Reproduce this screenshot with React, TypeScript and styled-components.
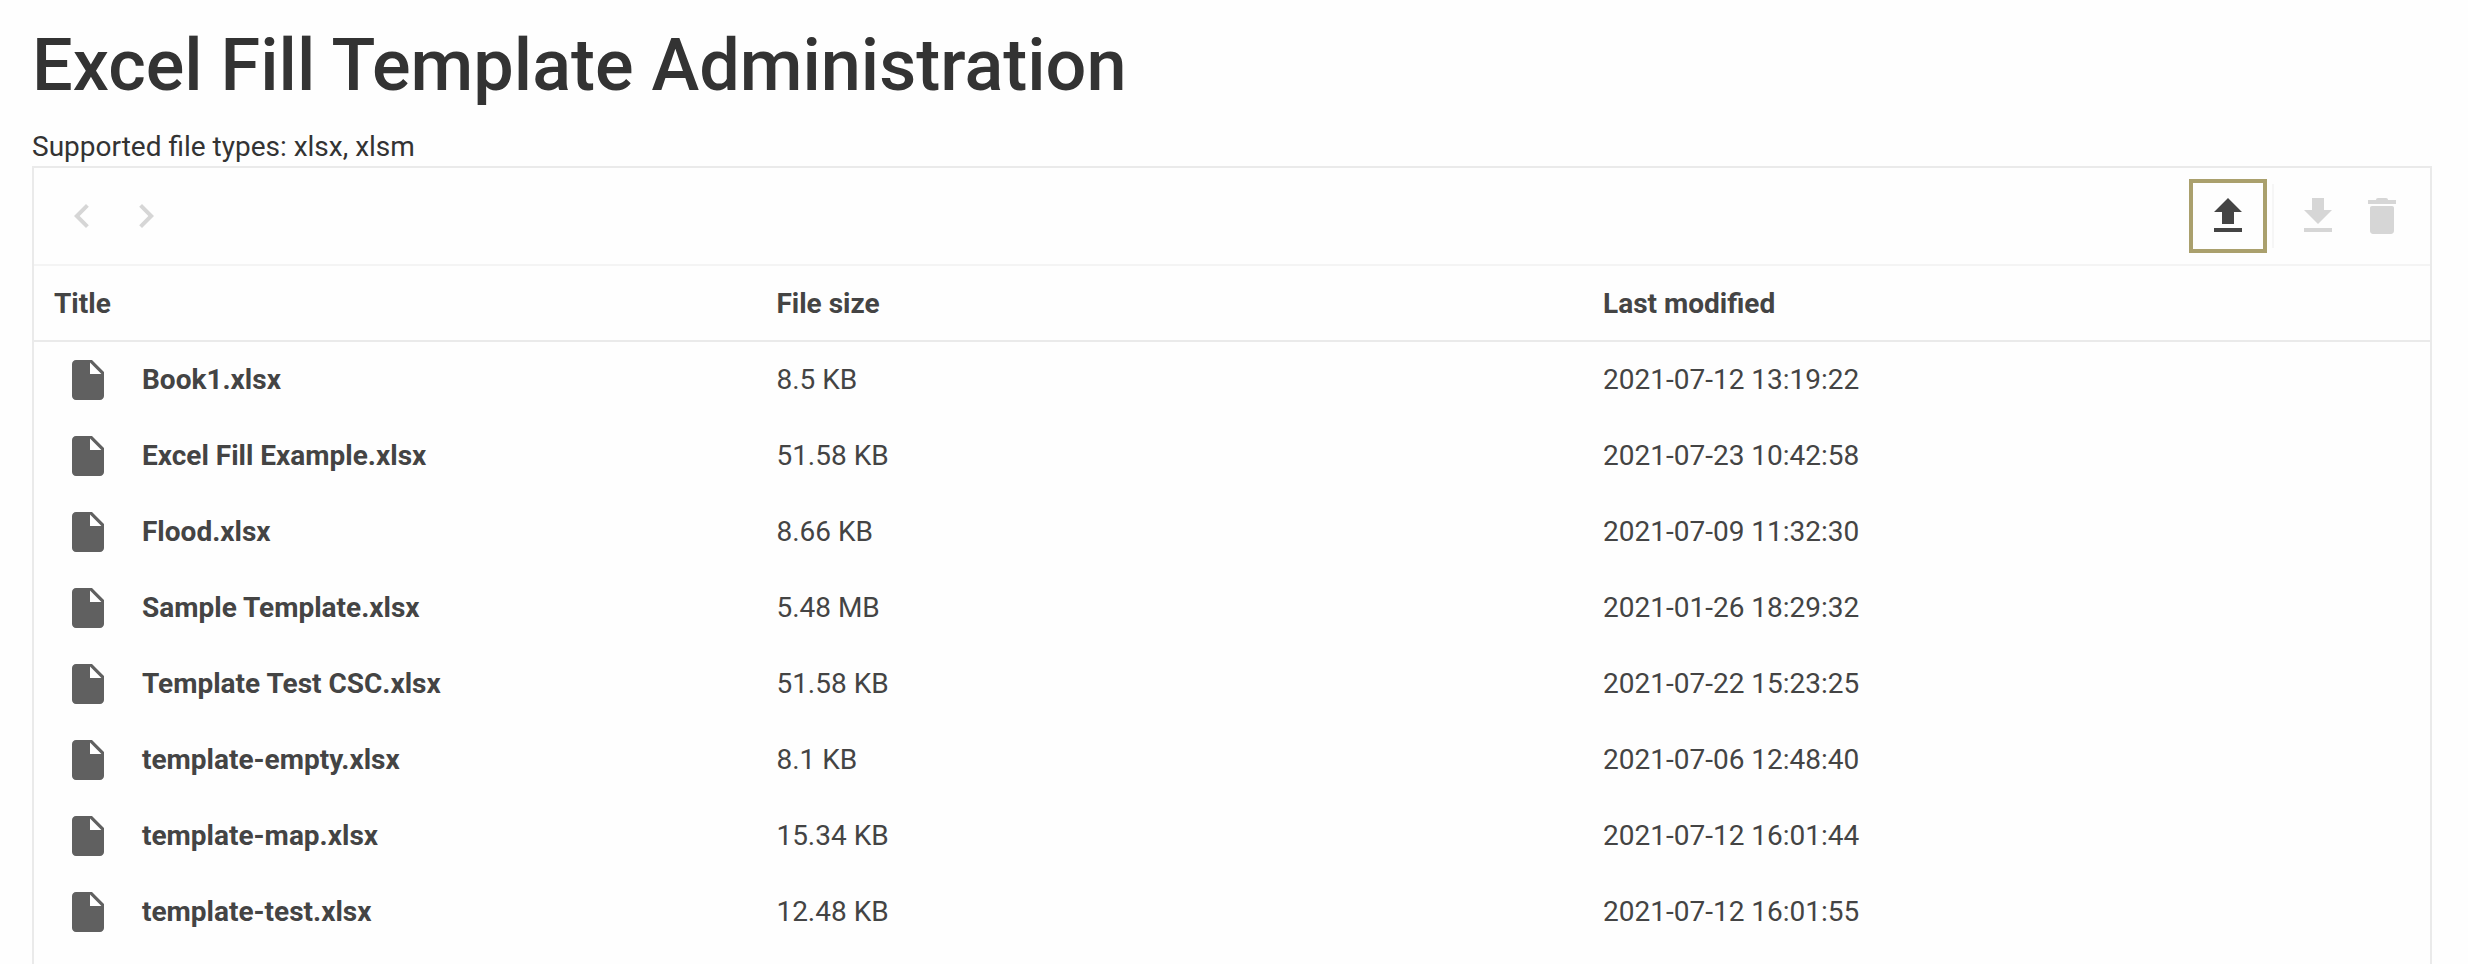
import React from 'react';
import styled, { createGlobalStyle } from 'styled-components';

const GlobalStyle = createGlobalStyle`
  *, *::before, *::after { box-sizing: border-box; }
  body {
    margin: 0;
    background: #fefefe;
    color: #333;
    font-family: Roboto, "Liberation Sans", sans-serif;
    font-size: 28px;
    line-height: 32px;
  }
`;

const Page = styled.main`
  display: flex;
  flex-direction: column;
  min-height: 100vh;
  padding: 24px 36px 0 32px;
`;

const Heading = styled.h1`
  margin: 0;
  font-size: 72px;
  font-weight: 500;
  line-height: 84px;
`;

const Note = styled.p`
  margin: 23px 0 3px;
`;

const Panel = styled.section`
  flex: 1;
  border: 2px solid #eaeaea;
  border-bottom: 0;
`;

const Toolbar = styled.div`
  display: flex;
  align-items: center;
  justify-content: space-between;
  height: 98px;
  padding: 0 24px;
  border-bottom: 2px solid #f4f4f4;
`;

const Group = styled.div`
  display: flex;
  align-items: center;
  gap: 16px;
`;

const IconButton = styled.button`
  display: flex;
  padding: 0;
  border: 0;
  background: none;
  color: #444;

  &:disabled { color: #d6d6d6; }
`;

const UploadButton = styled(IconButton)`
  padding: 9px 11px;
  border: 4px solid #aaa06d;
`;

const UploadSlot = styled.div`
  display: flex;
  align-items: center;
  height: 64px;
  padding-right: 5px;
  border-right: 2px solid #f6f6f6;
  margin-right: 4px;
`;

const Table = styled.table`
  width: 100%;
  border-collapse: separate;
  border-spacing: 0;
  table-layout: fixed;
  color: #444;
  text-align: left;
`;

const Column = styled.col<{ $share?: string }>`
  width: ${({ $share }) => $share ?? 'auto'};
`;

const HeadCell = styled.th`
  height: 76px;
  padding: 2px 20px 0;
  border-bottom: 2px solid #eaeaea;
  font-weight: 700;
`;

const Cell = styled.td`
  height: 76px;
  padding: 0 20px;
`;

const NameCell = styled.th`
  height: 76px;
  padding: 0 30px;
  font-weight: 700;
`;

const FileName = styled.div`
  display: flex;
  align-items: center;
  gap: 30px;
`;

const FileGlyph = styled.svg`
  flex: none;
  fill: #606060;
`;

const Icon = ({ d }: { d: string }) => (
  <svg width="48" height="48" viewBox="0 0 24 24" fill="currentColor" aria-hidden="true">
    <path d={d} />
  </svg>
);

const icons = {
  previous: 'M15.41 7.41 14 6l-6 6 6 6 1.41-1.41L10.83 12z',
  next: 'M10 6 8.59 7.41 13.17 12l-4.58 4.59L10 18l6-6z',
  upload: 'M9 16h6v-6h4l-7-7-7 7h4zM5 18h14v2H5z',
  download: 'M19 9h-4V3H9v6H5l7 7zM5 18v2h14v-2z',
  remove: 'M6 19.5c0 .8.7 1.5 1.5 1.5h9c.8 0 1.5-.7 1.5-1.5V8c0-.6-.4-1-1-1H7c-.6 0-1 .4-1 1zM19 4h-4c0-.6-.4-1-1-1h-4c-.6 0-1 .4-1 1H5v2h14z',
};

const files = [
  { name: 'Book1.xlsx', size: '8.5 KB', modified: '2021-07-12 13:19:22' },
  { name: 'Excel Fill Example.xlsx', size: '51.58 KB', modified: '2021-07-23 10:42:58' },
  { name: 'Flood.xlsx', size: '8.66 KB', modified: '2021-07-09 11:32:30' },
  { name: 'Sample Template.xlsx', size: '5.48 MB', modified: '2021-01-26 18:29:32' },
  { name: 'Template Test CSC.xlsx', size: '51.58 KB', modified: '2021-07-22 15:23:25' },
  { name: 'template-empty.xlsx', size: '8.1 KB', modified: '2021-07-06 12:48:40' },
  { name: 'template-map.xlsx', size: '15.34 KB', modified: '2021-07-12 16:01:44' },
  { name: 'template-test.xlsx', size: '12.48 KB', modified: '2021-07-12 16:01:55' },
];

export default function App() {
  return (
    <>
      <GlobalStyle />
      <Page>
        <Heading>Excel Fill Template Administration</Heading>
        <Note>Supported file types: xlsx, xlsm</Note>
        <Panel>
          <Toolbar>
            <Group>
              <IconButton type="button" aria-label="Previous" disabled><Icon d={icons.previous} /></IconButton>
              <IconButton type="button" aria-label="Next" disabled><Icon d={icons.next} /></IconButton>
            </Group>
            <Group>
              <UploadSlot>
                <UploadButton type="button" aria-label="Upload"><Icon d={icons.upload} /></UploadButton>
              </UploadSlot>
              <IconButton type="button" aria-label="Download" disabled><Icon d={icons.download} /></IconButton>
              <IconButton type="button" aria-label="Delete" disabled><Icon d={icons.remove} /></IconButton>
            </Group>
          </Toolbar>
          <Table>
            <colgroup>
              <Column $share="30.15%" />
              <Column $share="34.5%" />
              <Column />
            </colgroup>
            <thead>
              <tr>
                <HeadCell scope="col">Title</HeadCell>
                <HeadCell scope="col">File size</HeadCell>
                <HeadCell scope="col">Last modified</HeadCell>
              </tr>
            </thead>
            <tbody>
              {files.map((file) => (
                <tr key={file.name}>
                  <NameCell scope="row">
                    <FileName>
                      <FileGlyph width="48" height="48" viewBox="0 0 24 24" aria-hidden="true">
                        <path fillRule="evenodd" d="M6 2c-1.1 0-2 .9-2 2v16c0 1.1.9 2 2 2h12c1.1 0 2-.9 2-2V8l-6-6zM13 3.2l5.7 5.8H13z" />
                      </FileGlyph>
                      {file.name}
                    </FileName>
                  </NameCell>
                  <Cell>{file.size}</Cell>
                  <Cell>{file.modified}</Cell>
                </tr>
              ))}
            </tbody>
          </Table>
        </Panel>
      </Page>
    </>
  );
}
